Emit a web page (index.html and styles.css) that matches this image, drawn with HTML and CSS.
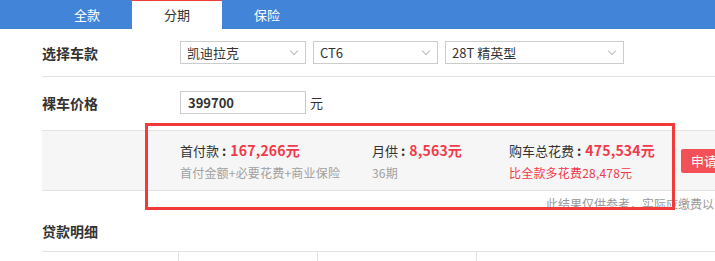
FILE: index.html
```html
<!DOCTYPE html>
<html lang="zh">
<head>
<meta charset="utf-8">
<link rel="stylesheet" href="styles.css">
</head>
<body>
<div class="page">
  <div class="tabs">
    <div class="tab">全款</div>
    <div class="tab active">分期</div>
    <div class="tab">保险</div>
  </div>
  <div class="row row-select">
    <div class="label">选择车款</div>
    <div class="select s1"><span>凯迪拉克</span><i class="chev"></i></div>
    <div class="select s2"><span>CT6</span><i class="chev"></i></div>
    <div class="select s3"><span>28T 精英型</span><i class="chev"></i></div>
  </div>
  <div class="row row-price">
    <div class="label">裸车价格</div>
    <div class="input">399700</div>
    <span class="unit">元</span>
  </div>
  <div class="result">
    <div class="col c1">
      <div class="main">首付款<span class="colon">:</span><b>167,266元</b></div>
      <div class="sub">首付金额+必要花费+商业保险</div>
    </div>
    <div class="col c2">
      <div class="main">月供<span class="colon">:</span><b>8,563元</b></div>
      <div class="sub">36期</div>
    </div>
    <div class="col c3">
      <div class="main">购车总花费<span class="colon">:</span><b>475,534元</b></div>
      <div class="sub red">比全款多花费28,478元</div>
    </div>
    <div class="btn">申请贷款</div>
  </div>
  <div class="note">此结果仅供参考，实际应缴费以当地为准</div>
  <div class="section-title">贷款明细</div>
  <div class="table">
    <div class="cell w1"></div>
    <div class="cell w2"></div>
    <div class="cell w3"></div>
    <div class="cell w4"></div>
  </div>
  <div class="highlight"></div>
</div>
</body>
</html>
```
FILE: styles.css
```css
* { box-sizing: border-box; }
html, body { margin: 0; padding: 0; overflow: hidden; background: #fff; }
body {
  font-family: "Noto Sans CJK SC", "Noto Sans", sans-serif;
  color: #333;
  width: 715px;
  height: 261px;
}
.page { position: relative; width: 715px; }
.tabs {
  display: flex;
  height: 29px;
  background: #4285d8;
  padding-left: 42px;
}
.tab {
  width: 90px;
  line-height: 29px;
  text-align: center;
  color: #fff;
  font-size: 13px;
}
.tab.active {
  background: #fff;
  color: #333;
  border-top: 1px solid #f23b3b;
  line-height: 27px;
}
.row {
  display: flex;
  align-items: center;
  margin-left: 42px;
}
.row-select {
  padding: 12px 0;
  border-bottom: 1px solid #e3e3e3;
}
.row-price { padding: 14px 0 16px; }
.label {
  width: 138px;
  font-size: 14px;
  font-weight: bold;
  color: #333;
}
.select {
  height: 23px;
  border: 1px solid #ccc;
  display: flex;
  align-items: center;
  justify-content: space-between;
  padding: 0 8px 0 6px;
  font-size: 13px;
  color: #333;
  margin-right: 7px;
}
.s1 { width: 126px; }
.s2 { width: 125px; }
.s3 { width: 179px; }
.chev {
  width: 6px;
  height: 6px;
  border-right: 1px solid #bbb;
  border-bottom: 1px solid #bbb;
  transform: rotate(45deg);
  margin-top: -4px;
}
.input {
  width: 126px;
  height: 23px;
  border: 1px solid #ccc;
  padding-left: 7px;
  line-height: 21px;
  font-size: 13px;
  font-weight: bold;
  color: #333;
}
.unit { font-size: 13px; margin-left: 4px; }
.result {
  margin-left: 42px;
  height: 61px;
  background: #f6f6f6;
  border-top: 1px solid #e3e3e3;
  border-bottom: 1px solid #e3e3e3;
  display: flex;
  align-items: center;
  padding-left: 138px;
  white-space: nowrap;
}
.col { flex-shrink: 0; padding-top: 2px; }
.col .main { font-size: 13px; color: #333; line-height: 22px; }
.col .main .colon { margin: 0 4px 0 3px; font-weight: bold; }
.col .main b { font-size: 14px; color: #f2394a; letter-spacing: 0.2px; }
.col .sub { font-size: 12px; color: #a0a0a0; line-height: 22px; letter-spacing: 0.2px; }
.col .sub.red { color: #f2394a; }
.c1 { width: 192px; }
.c2 { width: 137px; }
.c3 { width: 172px; }
.btn {
  background: #f35157;
  color: #fff;
  font-size: 13px;
  height: 24px;
  line-height: 24px;
  padding: 0 10px;
  border-radius: 2px;
  width: 90px;
  flex-shrink: 0;
}
.note {
  padding-left: 546px;
  font-size: 12px;
  color: #999;
  white-space: nowrap;
  line-height: 26px;
  height: 24px;
}
.section-title {
  margin-left: 42px;
  font-size: 14px;
  font-weight: bold;
  line-height: 32px;
  margin-bottom: 4px;
}
.table {
  margin-left: 42px;
  border-top: 1px solid #e3e3e3;
  display: flex;
  height: 20px;
}
.cell { border-right: 1px solid #e3e3e3; height: 20px; flex-shrink: 0; }
.w1 { width: 137px; }
.w2 { width: 139px; }
.w3 { width: 159px; }
.w4 { flex: 1; border-right: none; }
.highlight {
  position: absolute;
  left: 145px;
  top: 123px;
  width: 530px;
  height: 87px;
  border: 3px solid #f23a3a;
}
```
